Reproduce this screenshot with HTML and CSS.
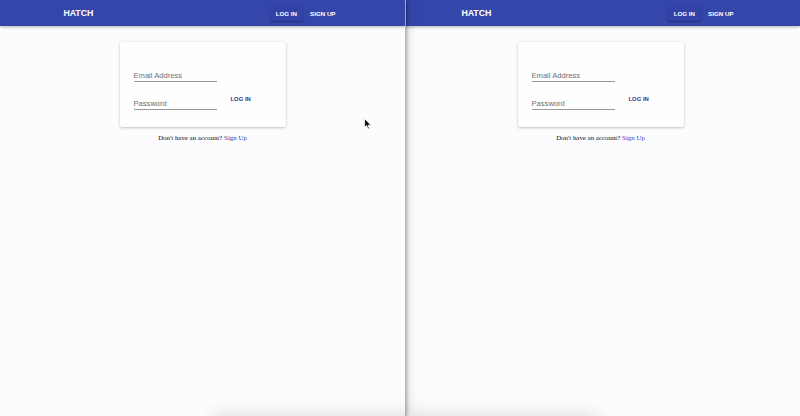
FILE: index.html
```html
<!DOCTYPE html>
<html>
<head>
<meta charset="utf-8">
<link rel="stylesheet" href="styles.css">
</head>
<body>
<div class="screen">
  <section class="pane pane-left">
    <header class="appbar">
      <div class="appbar-inner">
        <span class="brand">HATCH</span>
        <nav class="nav">
          <span class="nav-btn active">LOG IN</span>
          <span class="nav-btn">SIGN UP</span>
        </nav>
      </div>
    </header>
    <main class="content">
      <div class="card">
        <div class="fields">
          <div class="field">Email Address</div>
          <div class="field">Password</div>
        </div>
        <span class="submit">LOG IN</span>
      </div>
      <p class="signup">Don't have an account? <a class="link">Sign Up</a></p>
    </main>
    <svg class="cursor" width="8" height="12" viewBox="0 0 8 12"><path d="M0.5 0.5 L0.5 9.5 L2.6 7.6 L4 11 L5.4 10.4 L4 7.2 L7 7.2 Z" fill="#111" stroke="#fff" stroke-width="0.8"/></svg>
  </section>
  <section class="pane pane-right">
    <header class="appbar">
      <div class="appbar-inner">
        <span class="brand">HATCH</span>
        <nav class="nav">
          <span class="nav-btn active">LOG IN</span>
          <span class="nav-btn">SIGN UP</span>
        </nav>
      </div>
    </header>
    <main class="content">
      <div class="card">
        <div class="fields">
          <div class="field">Email Address</div>
          <div class="field">Password</div>
        </div>
        <span class="submit">LOG IN</span>
      </div>
      <p class="signup">Don't have an account? <a class="link link-bright">Sign Up</a></p>
    </main>
  </section>
  <div class="floor-shadow"></div>
</div>
</body>
</html>
```
FILE: styles.css
```css
* { box-sizing: border-box; }
html, body {
  margin: 0;
  padding: 0;
  width: 800px;
  height: 416px;
  overflow: hidden;
  background: #fcfbfe;
  font-family: "Liberation Sans", Arial, sans-serif;
}
.screen {
  position: relative;
  display: flex;
  width: 800px;
  height: 416px;
  overflow: hidden;
}
.pane {
  position: relative;
  height: 416px;
  background: #fcfbfe;
}
.pane-left {
  width: 406px;
  flex: none;
  z-index: 2;
  border-right: 1px solid #b9b9bd;
  box-shadow: 1px 0 3px rgba(0,0,0,0.25), 3px 0 9px rgba(0,0,0,0.12);
}
.pane-right {
  flex: 1;
  margin-left: -5px;
  z-index: 1;
}
.appbar {
  height: 26px;
  background: #3546ab;
  box-shadow: 0 1px 3px rgba(0,0,0,0.3);
  display: flex;
  justify-content: center;
}
.appbar-inner {
  width: 278px;
  display: flex;
  align-items: center;
  justify-content: space-between;
}
.brand {
  color: #fff;
  font-weight: bold;
  font-size: 8.8px;
  letter-spacing: -0.1px;
}
.nav {
  display: flex;
  align-items: center;
  gap: 1px;
}
.nav-btn {
  color: #fff;
  font-weight: bold;
  font-size: 6.2px;
  height: 15px;
  line-height: 15px;
  padding: 0 6px;
  border-radius: 2px;
}
.nav-btn.active {
  background: #3242a6;
  box-shadow: 0 1px 2px rgba(0,0,0,0.35);
}
.content {
  display: flex;
  flex-direction: column;
  align-items: center;
  padding-top: 16px;
}
.card {
  width: 166px;
  height: 85px;
  background: #fefeff;
  border-radius: 2px;
  box-shadow: 0 1px 3px rgba(0,0,0,0.22), 0 0 1px rgba(0,0,0,0.12);
  padding: 25px 14px 17px;
  display: flex;
}
.fields {
  display: flex;
  flex-direction: column;
  gap: 13px;
  width: 83px;
}
.field {
  height: 15px;
  font-size: 7.6px;
  color: #6f6f73;
  border-bottom: 1px solid #9a9a9e;
  line-height: 18px;
}
.submit {
  align-self: flex-end;
  margin-left: 8px;
  margin-bottom: 3px;
  height: 15px;
  line-height: 15px;
  padding: 0 6px;
  color: #2e3788;
  font-weight: bold;
  font-size: 5.9px;
}
.signup {
  margin: 7px 0 0;
  font-family: "Liberation Serif", "Times New Roman", serif;
  font-size: 6.9px;
  color: #111;
}
.link {
  color: #30399a;
}
.link-bright {
  color: #3443c8;
}
.cursor {
  position: absolute;
  left: 364px;
  top: 118px;
}
.floor-shadow {
  position: absolute;
  left: 215px;
  top: 420px;
  width: 380px;
  height: 20px;
  border-radius: 20px;
  box-shadow: 0 0 18px 6px rgba(0,0,0,0.12);
  z-index: 3;
}
```
